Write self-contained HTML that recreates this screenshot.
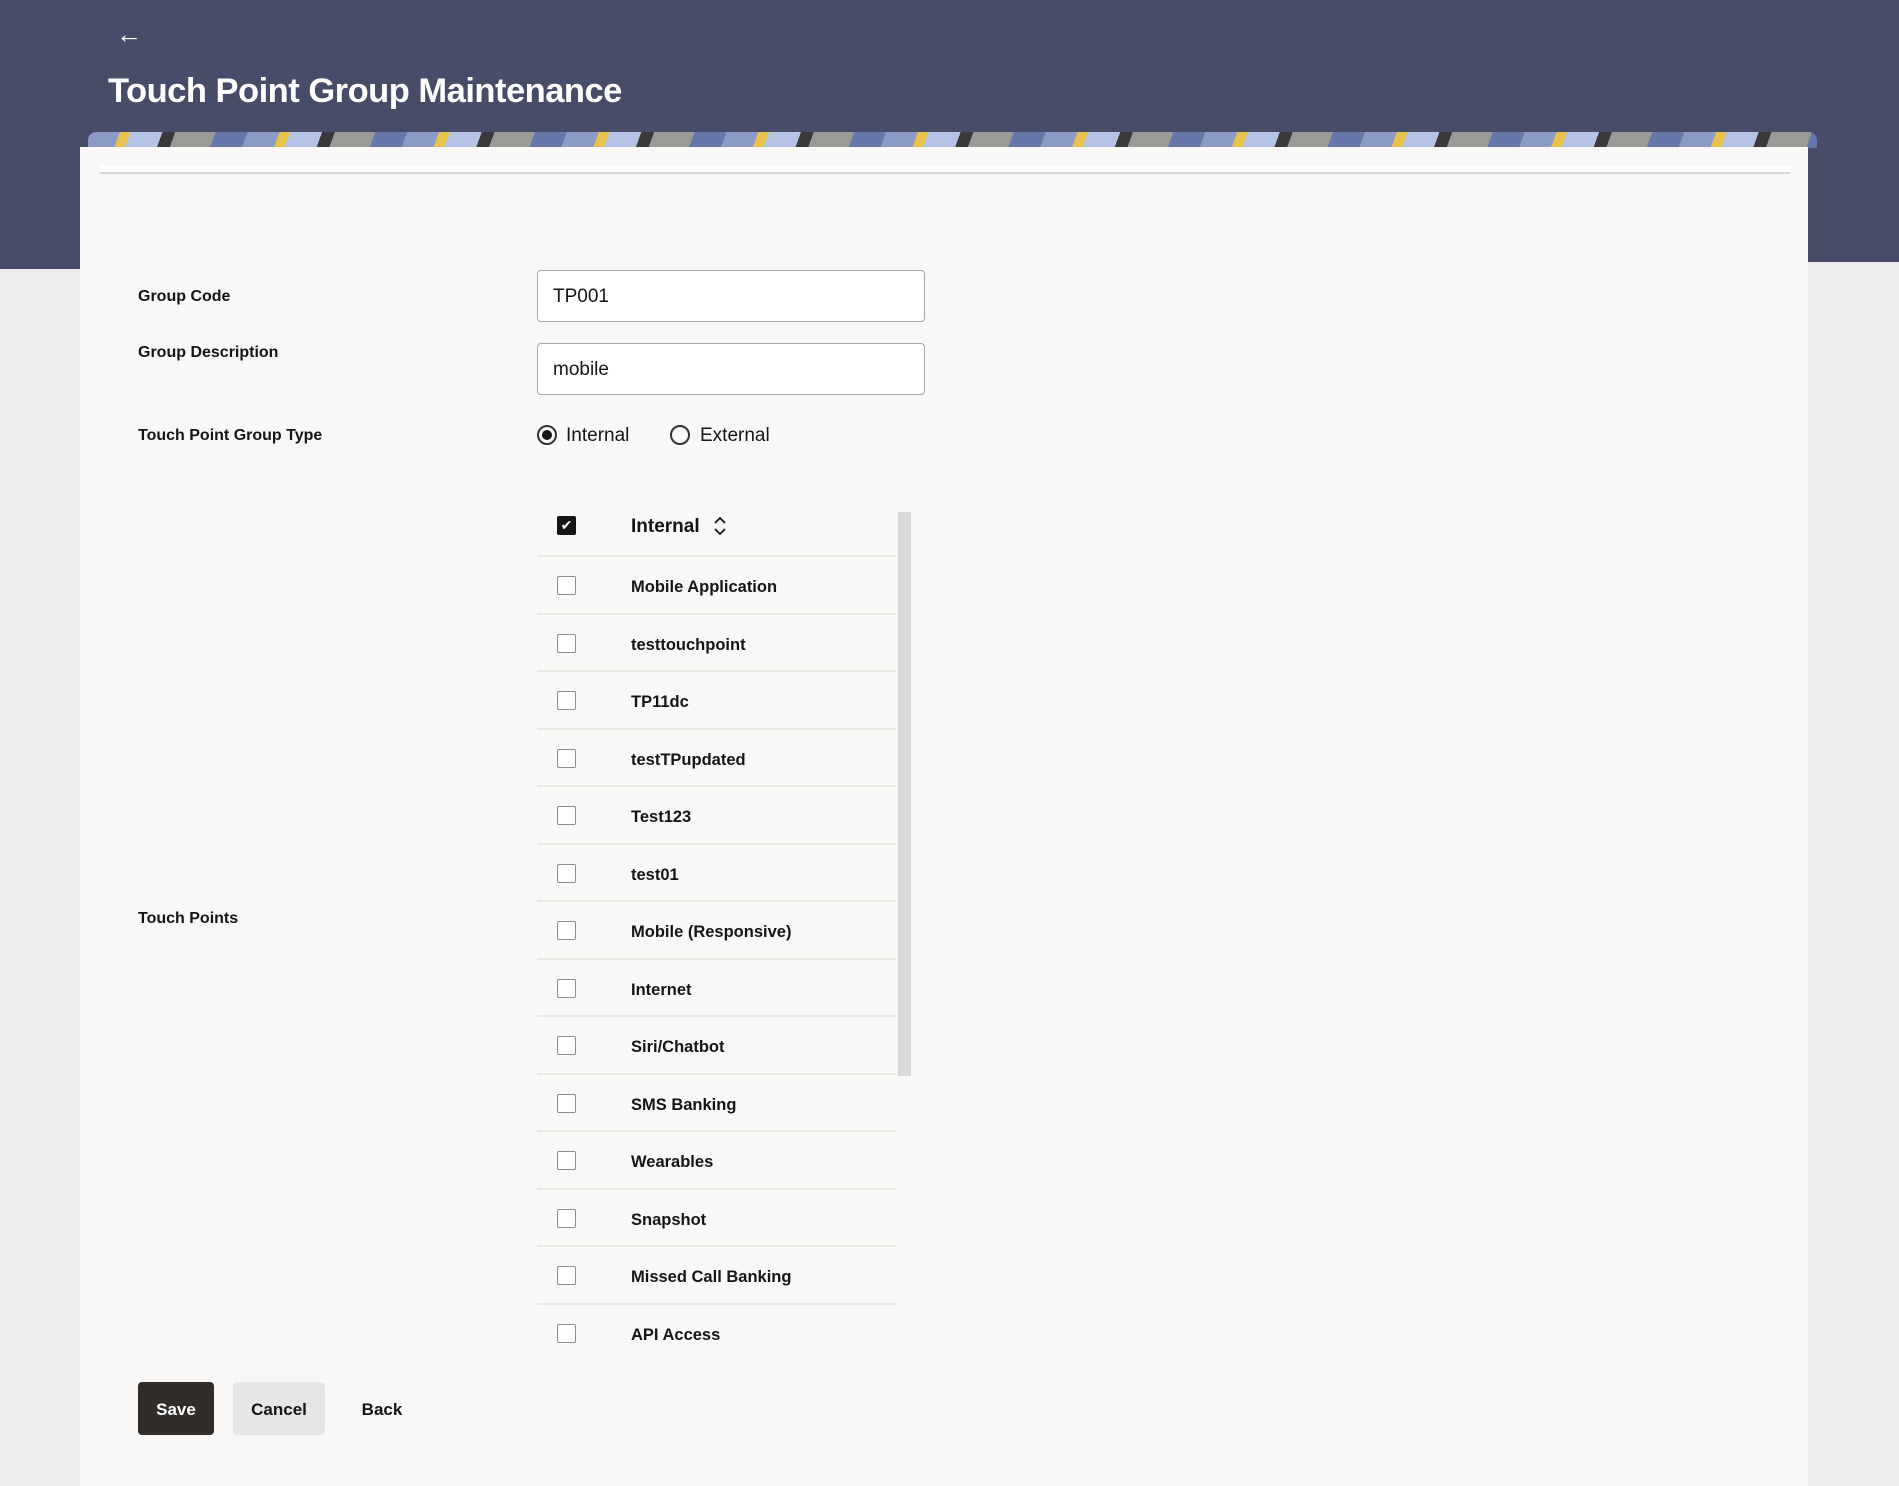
<!DOCTYPE html>
<html><head><meta charset="utf-8"><style>
*{box-sizing:border-box;margin:0;padding:0}
body{width:1899px;height:1486px;overflow:hidden;background:#efedeb;font-family:"Liberation Sans",sans-serif;color:#161513;position:relative}
.hdr{position:absolute;left:0;top:0;width:1899px;height:262px;background:#474c69}
.hdr2{position:absolute;left:0;top:262px;width:80px;height:7px;background:#474c69}
.back{position:absolute;left:116px;top:19px;color:#fff;font-size:26px}
h1{position:absolute;left:108px;top:72px;color:#fff;font-size:34.5px;font-weight:bold;letter-spacing:-0.5px}
.banner{position:absolute;left:88px;top:132px;width:1729px;height:16px;border-radius:8px 8px 0 0;
background:repeating-linear-gradient(110deg,#8c9bc6 0 30px,#e9c24e 30px 40px,#b5c4e6 40px 70px,#3a3a3a 70px 82px,#9c9a96 82px 120px,#6677aa 120px 150px)}
.card{position:absolute;left:80px;top:147px;width:1728px;height:1339px;background:#f9f8f6}
.strip{position:absolute;left:100px;top:166px;width:1690px;height:8px;background:#fff;border-bottom:2px solid #d3d3dc}
.lbl{position:absolute;left:138px;font-size:16px;font-weight:bold;color:#161513}
.inp{position:absolute;left:537px;width:388px;height:52px;border:1px solid #a9a8a6;border-radius:4px;background:#fff;font-size:19px;padding:15px 0 0 15px}
.radio{position:absolute;top:425px;width:20px;height:20px;border:2px solid #333;border-radius:50%}
.rt{position:absolute;top:425px;font-size:19px;color:#161513}
.row{position:absolute;left:537px;width:359px;height:57.5px;border-bottom:2px solid #e9e7e4}
.cb{position:absolute;left:20px;top:19px;width:19px;height:19px;border:1.5px solid #8f8d8a;border-radius:2px;background:#fff}
.rt2{position:absolute;left:94px;top:21px;font-size:16.5px;font-weight:bold;color:#161513}
.sb{position:absolute;left:898px;top:512px;width:13px;height:564px;background:#dcdad8}
.btn{position:absolute;top:1382px;height:53px;border-radius:4px;font-size:17px;font-weight:bold;text-align:center;line-height:55px}
</style></head><body>
<div class="hdr"></div><div class="hdr2"></div>
<div class="back">←</div>
<h1>Touch Point Group Maintenance</h1>
<div class="banner"></div>
<div class="card"></div>
<div class="strip"></div>
<div class="lbl" style="top:288px">Group Code</div>
<div class="lbl" style="top:344px">Group Description</div>
<div class="lbl" style="top:427px">Touch Point Group Type</div>
<div class="lbl" style="top:910px">Touch Points</div>
<div class="inp" style="top:270px">TP001</div>
<div class="inp" style="top:343px">mobile</div>
<div class="radio" style="left:537px"><div style="position:absolute;left:3px;top:3px;width:10px;height:10px;border-radius:50%;background:#161513"></div></div>
<div class="rt" style="left:566px">Internal</div>
<div class="radio" style="left:670px"></div>
<div class="rt" style="left:700px">External</div>
<div class="row" style="top:498px;height:59px">
<div style="position:absolute;left:20px;top:18px;width:19px;height:19px;background:#161513;border-radius:2px;color:#fff;font-size:14px;text-align:center;line-height:19px">✔</div>
<div style="position:absolute;left:94px;top:18px;font-size:19px;font-weight:bold">Internal</div>
<svg style="position:absolute;left:176px;top:18px" width="14" height="20" viewBox="0 0 14 20"><path d="M2 7 L7 2 L12 7 M2 13 L7 18 L12 13" fill="none" stroke="#161513" stroke-width="1.8"/></svg></div>
<div class="row" style="top:557px"><div class="cb"></div><div class="rt2">Mobile Application</div></div>
<div class="row" style="top:614.5px"><div class="cb"></div><div class="rt2">testtouchpoint</div></div>
<div class="row" style="top:672px"><div class="cb"></div><div class="rt2">TP11dc</div></div>
<div class="row" style="top:729.5px"><div class="cb"></div><div class="rt2">testTPupdated</div></div>
<div class="row" style="top:787px"><div class="cb"></div><div class="rt2">Test123</div></div>
<div class="row" style="top:844.5px"><div class="cb"></div><div class="rt2">test01</div></div>
<div class="row" style="top:902px"><div class="cb"></div><div class="rt2">Mobile (Responsive)</div></div>
<div class="row" style="top:959.5px"><div class="cb"></div><div class="rt2">Internet</div></div>
<div class="row" style="top:1017px"><div class="cb"></div><div class="rt2">Siri/Chatbot</div></div>
<div class="row" style="top:1074.5px"><div class="cb"></div><div class="rt2">SMS Banking</div></div>
<div class="row" style="top:1132px"><div class="cb"></div><div class="rt2">Wearables</div></div>
<div class="row" style="top:1189.5px"><div class="cb"></div><div class="rt2">Snapshot</div></div>
<div class="row" style="top:1247px"><div class="cb"></div><div class="rt2">Missed Call Banking</div></div>
<div class="row" style="top:1304.5px;border:none"><div class="cb"></div><div class="rt2">API Access</div></div>
<div class="sb"></div>
<div class="btn" style="left:138px;width:76px;background:#312d2a;color:#fff">Save</div>
<div class="btn" style="left:233px;width:92px;background:#e7e6e5">Cancel</div>
<div class="btn" style="left:352px;width:60px">Back</div>
</body></html>
